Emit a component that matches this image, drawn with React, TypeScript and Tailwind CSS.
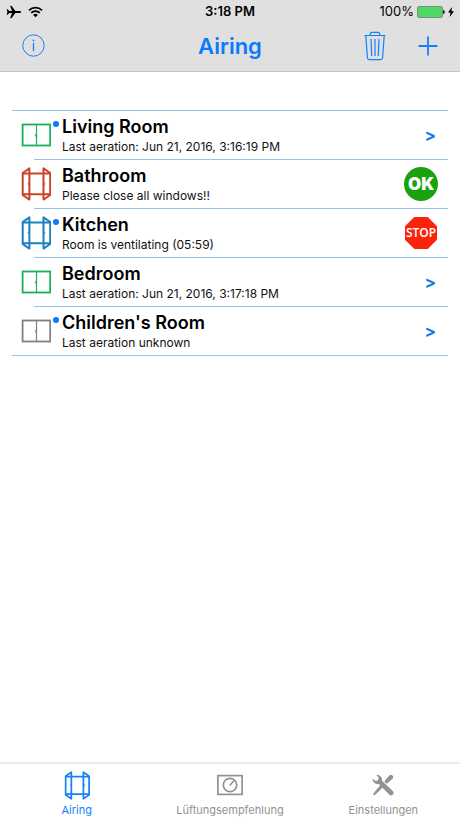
import type { ReactNode } from 'react'

type WindowState = 'closed' | 'open'

interface Room {
  name: string
  status: string
  window: WindowState
  color: string
  marked: boolean
  action: 'details' | 'ok' | 'stop'
}

const rooms: Room[] = [
  {
    name: 'Living Room',
    status: 'Last aeration: Jun 21, 2016, 3:16:19 PM',
    window: 'closed',
    color: 'text-[#17b05c]',
    marked: true,
    action: 'details',
  },
  {
    name: 'Bathroom',
    status: 'Please close all windows!!',
    window: 'open',
    color: 'text-[#cb4327]',
    marked: false,
    action: 'ok',
  },
  {
    name: 'Kitchen',
    status: 'Room is ventilating (05:59)',
    window: 'open',
    color: 'text-[#1b80bb]',
    marked: true,
    action: 'stop',
  },
  {
    name: 'Bedroom',
    status: 'Last aeration: Jun 21, 2016, 3:17:18 PM',
    window: 'closed',
    color: 'text-[#17b05c]',
    marked: false,
    action: 'details',
  },
  {
    name: "Children's Room",
    status: 'Last aeration unknown',
    window: 'closed',
    color: 'text-[#808080]',
    marked: true,
    action: 'details',
  },
]

function ClosedWindow() {
  return (
    <svg width="30" height="34" viewBox="0 0 30 34" fill="none" stroke="currentColor">
      <rect x="1.6" y="6.5" width="27.6" height="21" strokeWidth="1.8" />
      <path d="M15.5 7v20" strokeWidth="1.2" />
      <path d="M14.4 16v2.6" strokeWidth="0.8" />
    </svg>
  )
}

function OpenWindow({ width = 30, height = 34 }: { width?: number; height?: number }) {
  return (
    <svg width={width} height={height} viewBox="0 0 30 34" fill="none" stroke="currentColor" strokeWidth="2" strokeLinejoin="round">
      <path d="M1.7 6 8.4 1.4v31.2L1.7 28zM29.2 6l-6.7-4.6v31.2l6.7-4.6z" />
      <path d="M1.7 6.6h27.5M1.7 27.2h27.5" />
      <path d="M7.2 15.6v2.2M23.7 15.6v2.2" strokeWidth="0.8" />
    </svg>
  )
}

function GaugeIcon() {
  return (
    <svg width="26" height="22" viewBox="0 0 26 22" fill="none" stroke="currentColor">
      <rect x="0.9" y="1.6" width="24.2" height="18.8" strokeWidth="1.7" />
      <circle cx="13" cy="11" r="6.7" strokeWidth="1.7" />
      <path d="m12.7 11.6 4.4-5" strokeWidth="1.5" />
    </svg>
  )
}

function ToolsIcon() {
  return (
    <svg width="22" height="22" viewBox="0 0 22 22" fill="currentColor">
      <path d="M4.6.9A5 5 0 0 1 10 6.7L20.8 16.9a2.500 2.500 0 0 1-3.600 3.600L6.700 10A5 5 0 0 1 .7 4.400L3.500 6.900 5.900 6.400 6.700 3.800z" />
      <path d="m12.300 7.400 4.800-5.700c1-1.100 2.400-1.200 3.400-.2 1 1 .9 2.400-.2 3.400l-5.600 4.900zM8.200 11.300l2.300 2.200-5.600 5.700-2.900 2.200-1-1 2-2.800z" />
    </svg>
  )
}

function RoomAction({ room }: { room: Room }) {
  if (room.action === 'ok') {
    return (
      <button
        type="button"
        className="mr-[10px] flex h-[34px] w-[34px] items-center justify-center rounded-full bg-[#18a30c] text-[17px] leading-none font-black text-white"
      >
        OK
      </button>
    )
  }
  if (room.action === 'stop') {
    return (
      <button
        type="button"
        className="mr-[11px] flex h-8 w-8 items-center justify-center bg-[#fb230b] font-['Open_Sans',sans-serif] text-[12px] leading-none font-semibold text-white [clip-path:polygon(29%_0,71%_0,100%_29%,100%_71%,71%_100%,29%_100%,0_71%,0_29%)]"
      >
        STOP
      </button>
    )
  }
  return (
    <button type="button" aria-label={`Open ${room.name}`} className="mr-3 text-[17px] leading-none font-bold text-[#1279ea]">
      &gt;
    </button>
  )
}

function RoomRow({ room, last }: { room: Room; last: boolean }) {
  return (
    <li>
      <div className="flex h-12 items-center">
        <span className={`ml-[9px] shrink-0 ${room.color}`}>
          {room.window === 'open' ? <OpenWindow /> : <ClosedWindow />}
        </span>
        <span className="flex w-[11px] shrink-0 self-stretch pt-[10px] pl-[2px]">
          {room.marked && <span className="h-[6px] w-[6px] rounded-full bg-[#0a7aff]" />}
        </span>
        <div className="min-w-0 flex-1">
          <h2 className="text-[18px] leading-6 font-semibold text-black">{room.name}</h2>
          <p className="text-[12px] leading-4 text-[#111]">{room.status}</p>
        </div>
        <RoomAction room={room} />
      </div>
      <div className={last ? 'h-px bg-[#94c4ee]' : 'ml-[22px] h-px bg-[#94c4ee]'} />
    </li>
  )
}

function Tab({ label, active = false, children }: { label: string; active?: boolean; children: ReactNode }) {
  return (
    <button
      type="button"
      className={`flex flex-1 flex-col items-center text-[11px] leading-4 ${active ? 'text-[#1480fa]' : 'text-[#929292]'}`}
    >
      <span className="flex h-[38px] items-center pt-1">{children}</span>
      {label}
    </button>
  )
}

function StatusBar() {
  return (
    <div className="grid h-6 grid-cols-3 items-center px-[6px] text-[13px] text-black">
      <div className="flex items-center gap-[6px]">
        <svg width="16" height="14" viewBox="0 0 16 14" fill="currentColor">
          <path d="M15.2 7c0 .7-1 1-2 1H9.3l-3.8 5.2H4.1L6 8H3.2l-1.5 1.7H.7L1.4 7 .7 4.3h1L3.2 6H6L4.1.8h1.4L9.3 6h3.9c1 0 2 .3 2 1z" />
        </svg>
        <svg width="15" height="12" viewBox="0 0 15 12" fill="none" stroke="currentColor" strokeWidth="1.8">
          <path d="M1 4.3a9.2 9.2 0 0 1 13 0M3.2 6.9a6.1 6.1 0 0 1 8.6 0" />
          <path d="m7.5 11.3-2.4-2.4a3.4 3.4 0 0 1 4.8 0z" fill="currentColor" stroke="none" />
        </svg>
      </div>
      <span className="text-center font-semibold">3:18 PM</span>
      <div className="flex items-center justify-end">
        <span>100%</span>
        <svg className="ml-[3px]" width="28" height="12" viewBox="0 0 28 12">
          <rect x="0.5" y="0.5" width="25" height="11" rx="1.5" fill="#4cd964" stroke="#7d8c7f" />
          <path d="M26 4c1.3 0 1.8 1 1.8 2s-.5 2-1.8 2z" fill="#222" />
        </svg>
        <svg className="ml-[3px]" width="6" height="10" viewBox="0 0 6 10" fill="currentColor">
          <path d="M4 0 0 5.6h2.5L1.7 10 6 4.2H3.5z" />
        </svg>
      </div>
    </div>
  )
}

export default function App() {
  return (
    <div className="flex min-h-screen flex-col bg-white font-['Inter',sans-serif]">
      <header className="border-b border-[#c4c4c4] bg-[#e0e0e0]">
        <StatusBar />
        <div className="grid h-[47px] grid-cols-3 items-center pb-1">
          <button type="button" aria-label="Info" className="ml-[22px] justify-self-start text-[#1480fa]">
            <svg width="23" height="23" viewBox="0 0 23 23" fill="none" stroke="currentColor">
              <circle cx="11.5" cy="11.5" r="10.7" strokeWidth="1" />
              <path d="M11.5 9v8" strokeWidth="1.3" />
              <circle cx="11.5" cy="6.5" r="0.9" fill="currentColor" stroke="none" />
            </svg>
          </button>
          <h1 className="text-center text-[22px] leading-7 font-semibold text-[#0a7aff]">Airing</h1>
          <div className="flex items-center justify-end gap-8 pr-[22px] text-[#1480fa]">
            <button type="button" aria-label="Delete">
              <svg width="22" height="30" viewBox="0 0 22 30" fill="none" stroke="currentColor" strokeLinejoin="round">
                <path d="M.5 4.5h21M6 4.2l.6-2c.2-.6.7-.9 1.3-.9h6.2c.6 0 1.1.3 1.3.9l.6 2" strokeWidth="1.2" />
                <path d="m1.8 4.8 1.6 22c.1 1.3.8 1.9 2 1.9h11.2c1.2 0 1.9-.6 2-1.9l1.6-22M7 8l.7 17M11 8v17M15 8l-.7 17" strokeWidth="1.2" />
              </svg>
            </button>
            <button type="button" aria-label="Add room">
              <svg width="20" height="20" viewBox="0 0 20 20" stroke="currentColor" strokeWidth="1.8">
                <path d="M10 .5v19M.5 10h19" />
              </svg>
            </button>
          </div>
        </div>
      </header>

      <main className="flex-1 px-3 pt-[38px]">
        <ul className="border-t border-[#94c4ee]">
          {rooms.map((room, i) => (
            <RoomRow key={room.name} room={room} last={i === rooms.length - 1} />
          ))}
        </ul>
      </main>

      <nav className="flex border-t-2 border-[#ececec]">
        <Tab label="Airing" active>
          <OpenWindow width={26} height={29} />
        </Tab>
        <Tab label="Lüftungsempfehlung">
          <GaugeIcon />
        </Tab>
        <Tab label="Einstellungen">
          <ToolsIcon />
        </Tab>
      </nav>
    </div>
  )
}
